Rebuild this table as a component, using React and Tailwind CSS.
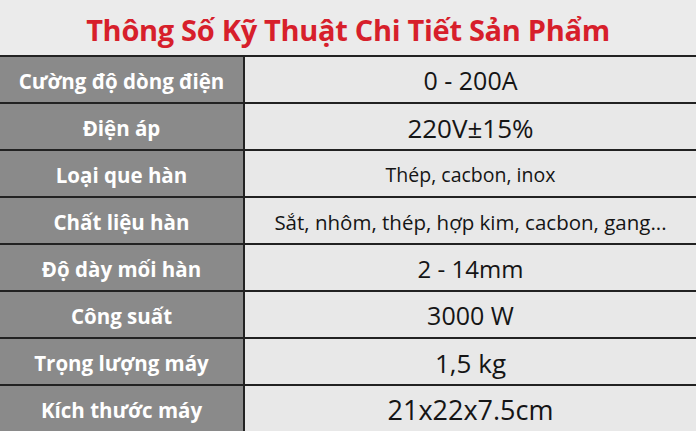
const rows = [
  { label: "Cường độ dòng điện", value: "0 - 200A", size: "text-[25px]" },
  { label: "Điện áp", value: "220V±15%", size: "text-[26px]" },
  { label: "Loại que hàn", value: "Thép, cacbon, inox", size: "text-[19.5px]" },
  { label: "Chất liệu hàn", value: "Sắt, nhôm, thép, hợp kim, cacbon, gang...", size: "text-[20.5px]" },
  { label: "Độ dày mối hàn", value: "2 - 14mm", size: "text-[24px]" },
  { label: "Công suất", value: "3000 W", size: "text-[25px]" },
  { label: "Trọng lượng máy", value: "1,5 kg", size: "text-[26px]" },
  { label: "Kích thước máy", value: "21x22x7.5cm", size: "text-[27px]" },
];

export default function App() {
  return (
    <div
      className="w-[696px] h-[431px] overflow-hidden bg-[#ebebeb] flex flex-col"
      style={{ fontFamily: '"Open Sans", "Noto Sans", sans-serif' }}
    >
      <div className="h-[57px] flex items-center justify-center">
        <h1 className="text-[29px] font-bold text-[#d71f2b] tracking-[-0.3px] pt-[4px]">
          Thông Số Kỹ Thuật Chi Tiết Sản Phẩm
        </h1>
      </div>
      <div className="flex flex-col">
        {rows.map((r) => (
          <div key={r.label} className="flex h-[47px] border-t-2 border-[#222]">
            <div className="w-[245px] bg-[#8a8a8a] flex items-center justify-center pt-[3px] text-white font-bold text-[20.5px] border-r-2 border-[#222]">
              {r.label}
            </div>
            <div className={`flex-1 bg-[#e8e8e8] flex items-center justify-center pt-[3px] text-[#151515] ${r.size}`}>
              {r.value}
            </div>
          </div>
        ))}
      </div>
    </div>
  );
}
